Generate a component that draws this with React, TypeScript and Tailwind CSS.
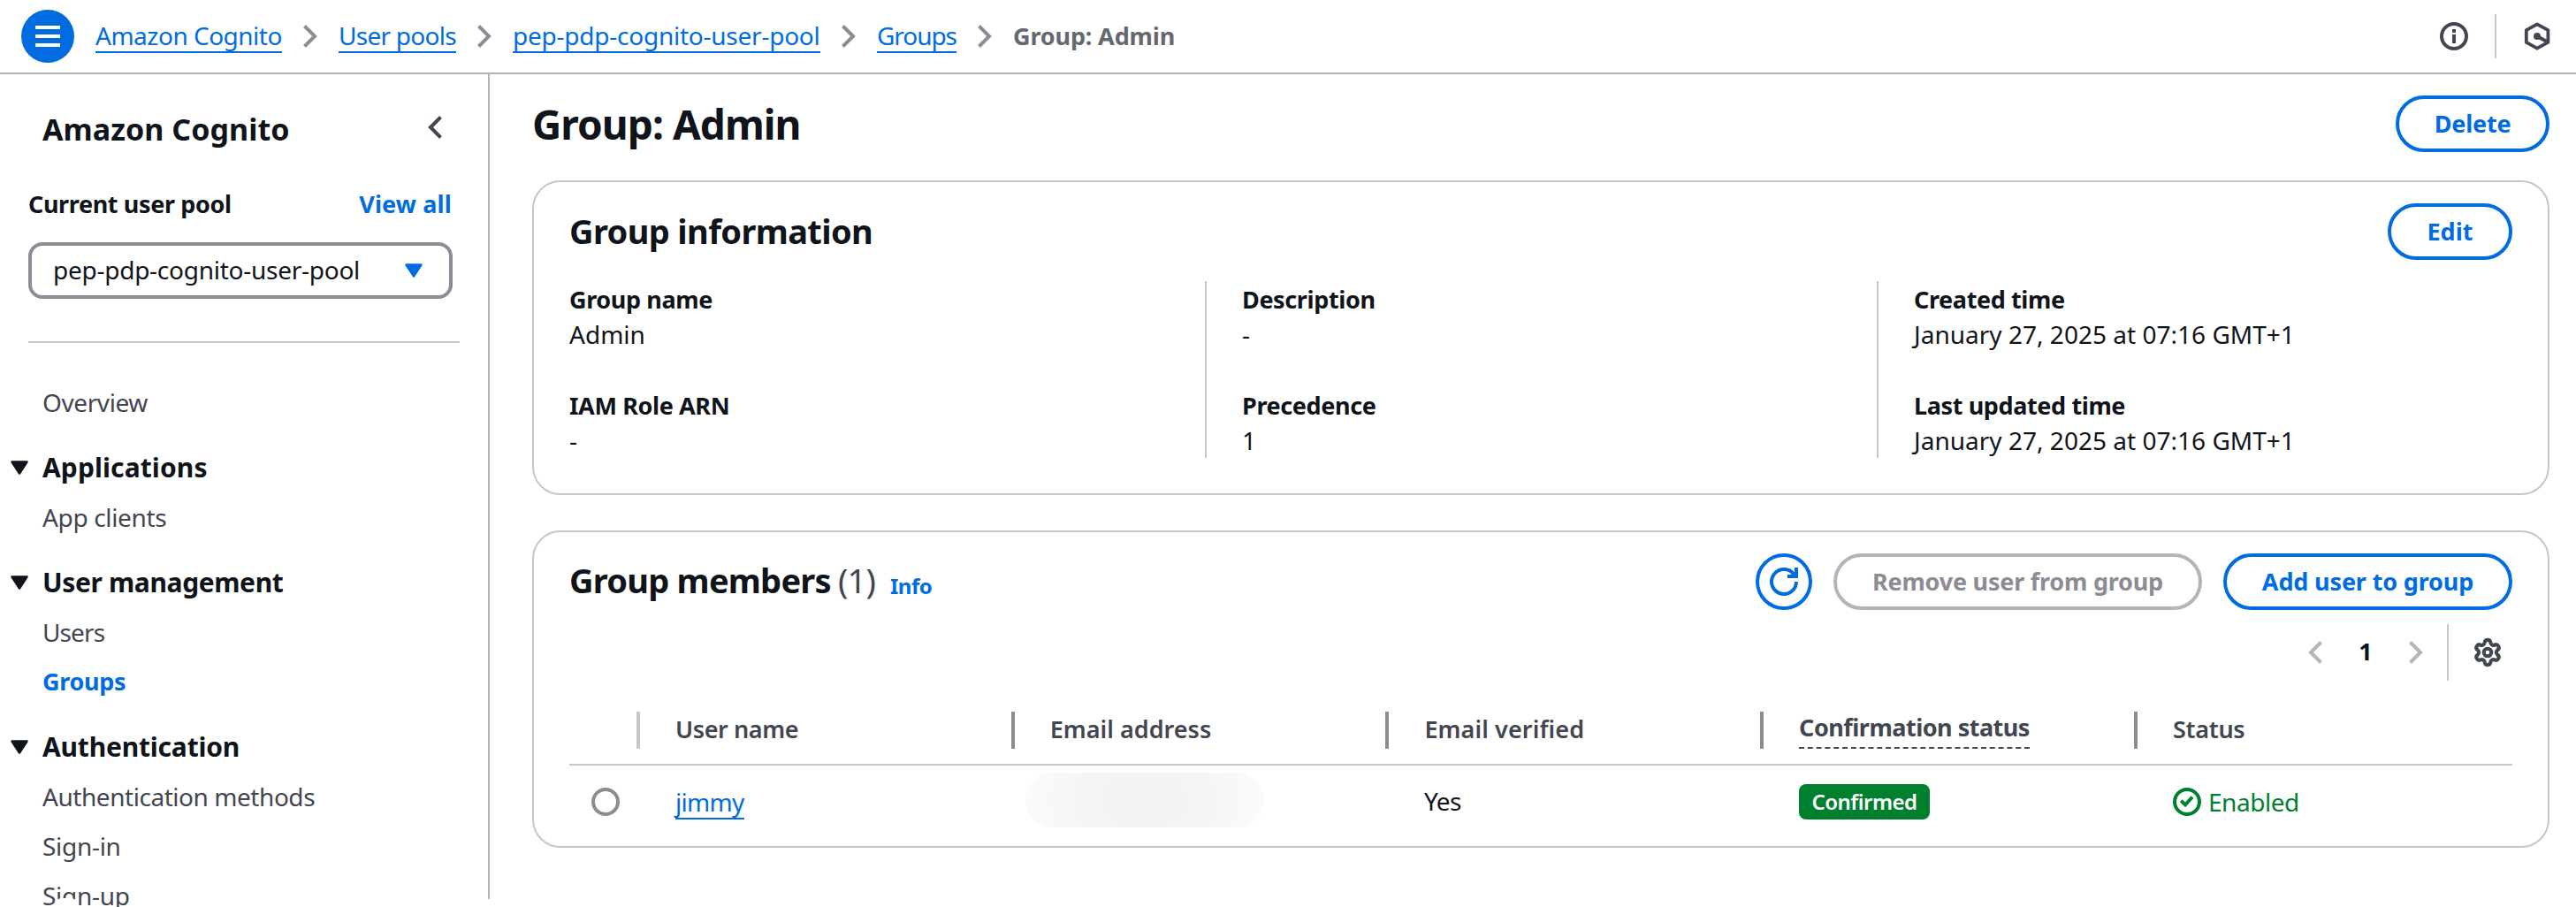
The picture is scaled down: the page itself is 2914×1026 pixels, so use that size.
import { Settings } from "lucide-react";
import type { ReactNode } from "react";

type Item = { label: string; className: string };

function AngleRight({ className }: { className: string }) {
  return (
    <svg width="16" height="26" viewBox="0 0 16 26" fill="none" className={className}>
      <path d="M1.5 1.5L13 13L1.5 24.5" stroke="currentColor" strokeWidth="4" />
    </svg>
  );
}

function CaretDown({ className }: { className: string }) {
  return (
    <svg width="20" height="16" viewBox="0 0 20 16" className={className}>
      <path d="M1.5 1.5H18.5L10 14.5Z" fill="currentColor" stroke="currentColor" strokeWidth="2.5" strokeLinejoin="round" />
    </svg>
  );
}

function InfoIcon() {
  return (
    <svg width="32" height="32" viewBox="0 0 32 32" fill="none">
      <circle cx="16" cy="16" r="14" stroke="currentColor" strokeWidth="4" />
      <path d="M16 8v4M16 14v10" stroke="currentColor" strokeWidth="4" />
    </svg>
  );
}

function HexagonIcon() {
  return (
    <svg width="32" height="32" viewBox="0 0 32 32" fill="none">
      <path d="M16 2.4L28.4 9.2V22.8L16 29.6L3.8 22.8V9.2Z" stroke="currentColor" strokeWidth="3.8" strokeLinejoin="round" />
      <circle cx="16" cy="16" r="4" fill="currentColor" />
      <path d="M16 16L27 22" stroke="currentColor" strokeWidth="4" />
    </svg>
  );
}

function RefreshIcon() {
  return (
    <svg width="32" height="32" viewBox="0 0 32 32" fill="none">
      <path d="M30 16A14 14 0 1 1 27.5 8" stroke="currentColor" strokeWidth="4" />
      <path d="M30 0V10H20" stroke="currentColor" strokeWidth="4" />
    </svg>
  );
}

function CheckCircle() {
  return (
    <svg width="32" height="32" viewBox="0 0 32 32" fill="none">
      <circle cx="16" cy="16" r="14" stroke="currentColor" strokeWidth="4" />
      <path d="M9.2 14.8L14 19.4L22 10.6" stroke="currentColor" strokeWidth="4" />
    </svg>
  );
}

function Button({ children, className }: { children: ReactNode; className: string }) {
  return (
    <button className={`flex h-16 shrink-0 items-center justify-center rounded-full border-4 pb-px text-[27px] font-bold whitespace-nowrap ${className}`}>
      {children}
    </button>
  );
}

const crumbs: Item[] = [
  { label: "Amazon Cognito", className: "w-[211px] tracking-[-0.5px]" },
  { label: "User pools", className: "w-[133px] tracking-[-0.73px]" },
  { label: "pep-pdp-cognito-user-pool", className: "w-[348px] tracking-[-0.24px]" },
  { label: "Groups", className: "w-[90px] tracking-[-1.05px]" },
];

function TopBar() {
  return (
    <header className="flex h-[84px] shrink-0 items-center border-b-2 border-[#b4b4bb] pl-6">
      <button className="flex size-[60px] flex-col items-center justify-center gap-[6px] rounded-full bg-[#006ce0]">
        <span className="h-1 w-7 bg-white" />
        <span className="h-1 w-7 bg-white" />
        <span className="h-1 w-7 bg-white" />
      </button>
      <nav className="ml-6 flex items-center gap-6">
        {crumbs.map((c) => (
          <div key={c.label} className="flex items-center gap-6">
            <a className={`block border-b-2 border-[#006ce0] leading-9 whitespace-nowrap text-[#006ce0] ${c.className}`}>{c.label}</a>
            <AngleRight className="text-[#8c8c94]" />
          </div>
        ))}
        <span className="text-[27px] leading-9 font-bold tracking-[-0.15px] text-[#656871]">Group: Admin</span>
      </nav>
      <div className="mr-7 ml-auto flex items-center text-[#424650]">
        <InfoIcon />
        <span className="mx-[30px] h-[50px] w-[2px] bg-[#c6c6cd]" />
        <HexagonIcon />
      </div>
    </header>
  );
}

const sections: { title: string; titleClass: string; items: Item[] }[] = [
  {
    title: "Applications",
    titleClass: "tracking-[0.1px]",
    items: [{ label: "App clients", className: "tracking-[-0.35px]" }],
  },
  {
    title: "User management",
    titleClass: "tracking-[-0.38px]",
    items: [
      { label: "Users", className: "tracking-[-0.9px]" },
      { label: "Groups", className: "text-[27px] font-bold tracking-[-0.3px] text-[#006ce0]" },
    ],
  },
  {
    title: "Authentication",
    titleClass: "tracking-[-0.2px]",
    items: [
      { label: "Authentication methods", className: "tracking-[-0.45px]" },
      { label: "Sign-in", className: "tracking-[-0.3px]" },
      { label: "Sign-up", className: "tracking-[-0.3px]" },
    ],
  },
];

function Sidebar() {
  return (
    <aside className="relative flex w-[554px] shrink-0 flex-col">
      <div className="flex h-[933px] flex-col border-r-2 border-[#b4b4bb]">
        <div className="mt-[39px] flex items-center justify-between pr-[52px] pl-12">
          <h2 className="text-[34px] leading-[46px] font-bold tracking-[0.05px]">Amazon Cognito</h2>
          <AngleRight className="mb-[5px] rotate-180 text-[#424650]" />
        </div>
        <div className="mt-[42px] flex justify-between pr-[41px] pl-8 text-[27px] leading-10 font-bold">
          <span className="tracking-[-0.38px]">Current user pool</span>
          <span className="tracking-[0.15px] text-[#006ce0]">View all</span>
        </div>
        <div className="mt-[23px] ml-8 flex h-16 w-[480px] shrink-0 items-center justify-between rounded-2xl border-4 border-[#8c8c94] pr-[30px] pb-[2px] pl-6">
          <span className="tracking-[-0.26px]">pep-pdp-cognito-user-pool</span>
          <CaretDown className="mt-[2px] text-[#006ce0]" />
        </div>
        <div className="mt-12 ml-8 h-[2px] w-[488px] shrink-0 bg-[#c6c6cd]" />
        <a className="mt-[47px] ml-12 leading-10 tracking-[-0.4px] text-[#424650]">Overview</a>
        <nav className="mt-[34px] flex flex-col gap-[34px]">
          {sections.map((s) => (
            <div key={s.title}>
              <div className="flex items-center pl-3">
                <CaretDown className="mr-4" />
                <h3 className={`text-[30px] leading-10 font-bold ${s.titleClass}`}>{s.title}</h3>
              </div>
              <div className="mt-4 flex flex-col gap-4 pl-12 text-[#424650]">
                {s.items.map((i) => (
                  <a key={i.label} className={`leading-10 ${i.className}`}>
                    {i.label}
                  </a>
                ))}
              </div>
            </div>
          ))}
        </nav>
      </div>
      <span className="absolute top-[932px] left-[62px] h-[20px] w-[26px] rounded-t-lg bg-white" />
    </aside>
  );
}

function Field({ label, value }: { label: string; value: string }) {
  return (
    <div className="leading-10">
      <div className="pt-px text-[27px] leading-[39px] font-bold tracking-[-0.38px]">{label}</div>
      <div className="tracking-[0.02px]">{value}</div>
    </div>
  );
}

const headers: Item[] = [
  { label: "User name", className: "tracking-[-0.4px]" },
  { label: "Email address", className: "tracking-[0.02px]" },
  { label: "Email verified", className: "tracking-[0.1px]" },
];

function GroupInformation() {
  return (
    <section className="mt-8 h-[356px] rounded-[32px] border-2 border-[#c6c6cd] pt-6 pr-10 pl-10">
      <div className="flex h-16 items-center justify-between">
        <h2 className="pb-[2px] text-[38px] leading-[48px] font-bold tracking-[-0.62px]">Group information</h2>
        <Button className="w-[141px] border-[#006ce0] text-[#006ce0]">Edit</Button>
      </div>
      <div className="mt-6 grid h-[200px] grid-cols-[719px_760px_1fr]">
        <div className="flex flex-col gap-10">
          <Field label="Group name" value="Admin" />
          <Field label="IAM Role ARN" value="-" />
        </div>
        <div className="flex flex-col gap-10 border-l-2 border-[#c6c6cd] pl-10">
          <Field label="Description" value="-" />
          <Field label="Precedence" value="1" />
        </div>
        <div className="flex flex-col gap-10 border-l-2 border-[#c6c6cd] pl-10">
          <Field label="Created time" value="January 27, 2025 at 07:16 GMT+1" />
          <Field label="Last updated time" value="January 27, 2025 at 07:16 GMT+1" />
        </div>
      </div>
    </section>
  );
}

function GroupMembers() {
  return (
    <section className="mt-10 h-[359px] rounded-[32px] border-2 border-[#c6c6cd] pt-6 pr-10 pl-10">
      <div className="flex h-16 items-center">
        <div className="flex items-baseline pb-[2px]">
          <h2 className="text-[38px] leading-[48px] font-bold tracking-[-0.75px]">Group members</h2>
          <span className="ml-[8px] text-[38px] leading-[48px] tracking-[-0.8px] text-[#424650]">(1)</span>
          <a className="ml-[17px] translate-y-px text-[24px] font-bold tracking-[-0.5px] text-[#006ce0]">Info</a>
        </div>
        <div className="ml-auto flex gap-6">
          <Button className="w-16 border-[#006ce0] pb-0! text-[#006ce0]">
            <RefreshIcon />
          </Button>
          <Button className="w-[417px] border-[#b4b4bb] tracking-[-0.22px] text-[#8c8c94]">Remove user from group</Button>
          <Button className="w-[327px] border-[#006ce0] tracking-[-0.15px] text-[#006ce0]">Add user to group</Button>
        </div>
      </div>
      <div className="mt-4 flex h-16 items-center justify-end text-[#b4b4bb]">
        <AngleRight className="rotate-180" />
        <span className="mx-10 w-[18px] pb-[2px] text-center text-[27px] font-bold text-[#0f141a]">1</span>
        <AngleRight className="" />
        <span className="mr-[27px] ml-[27px] h-16 w-[2px] bg-[#c6c6cd]" />
        <Settings size={34} strokeWidth={2.9} className="mr-[11px] text-[#424650]" />
      </div>
      <div className="mt-[18px] flex h-[78px] items-center border-b-2 border-[#c6c6cd] text-[27px] font-semibold text-[#424650]">
        <div className="flex h-[42px] w-[80px] shrink-0 justify-end border-r-4 border-[#c6c6cd]" />
        {headers.map((h) => (
          <div key={h.label} className="flex h-[42px] w-[423.7px] shrink-0 items-center border-r-4 border-[#8c8c94] pb-[2px] pl-10">
            <span className={h.className}>{h.label}</span>
          </div>
        ))}
        <div className="flex h-[42px] w-[423px] shrink-0 items-center border-r-4 border-[#8c8c94] pl-10">
          <span className="h-[42px] w-[261px] border-b-2 border-dashed border-[#424650] leading-[36px] font-bold tracking-[-0.5px]">
            Confirmation status
          </span>
        </div>
        <div className="pb-[2px] pl-10 tracking-[-0.3px]">Status</div>
      </div>
      <div className="flex h-[82px] items-center">
        <div className="flex w-[120px] shrink-0 pl-[25px]">
          <span className="size-8 rounded-full border-4 border-[#8c8c94]" />
        </div>
        <div className="w-[396px] shrink-0">
          <a className="inline-block w-[78px] border-b-2 border-[#006ce0] leading-9 tracking-[-0.7px] text-[#006ce0]">jimmy</a>
        </div>
        <div className="w-[451px] shrink-0">
          <div className="mb-1 h-[62px] w-[270px] rounded-[31px] bg-[radial-gradient(150px_100px_at_center,#f2f2f2_0%,#f4f4f4_40%,#fbfbfb_95%)]" />
        </div>
        <div className="w-[424px] shrink-0 pb-[2px] tracking-[-0.6px]">Yes</div>
        <div className="w-[423px] shrink-0">
          <span className="flex h-10 w-[148px] items-center justify-center rounded-lg bg-[#00802f] text-[24px] font-semibold tracking-[-0.5px] text-white">
            Confirmed
          </span>
        </div>
        <div className="flex items-center text-[#00802f]">
          <CheckCircle />
          <span className="ml-[8px] pb-px tracking-[-0.45px]">Enabled</span>
        </div>
      </div>
    </section>
  );
}

export default function App() {
  return (
    <div className="flex h-[1026px] w-[2914px] flex-col overflow-hidden bg-white font-['Noto_Sans',sans-serif] text-[28px] leading-10 text-[#0f141a]">
      <TopBar />
      <div className="flex min-h-0 flex-1">
        <Sidebar />
        <main className="flex-1 pt-6 pr-[30px] pl-12">
          <div className="flex h-16 items-center justify-between">
            <h1 className="text-[46px] leading-[60px] font-bold tracking-[-0.95px]">Group: Admin</h1>
            <Button className="w-[174px] border-[#006ce0] tracking-[-0.2px] text-[#006ce0]">Delete</Button>
          </div>
          <GroupInformation />
          <GroupMembers />
        </main>
      </div>
    </div>
  );
}
